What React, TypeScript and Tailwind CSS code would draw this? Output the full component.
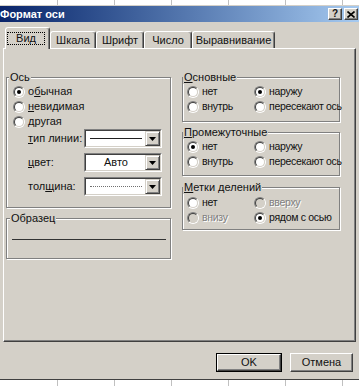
import React from 'react';

const FONT = "font-['Liberation_Sans',Arial,sans-serif]";

function GridStrip({ className }: { className: string }) {
  const cols = [58, 57, 57, 57, 57, 57, 57];
  return (
    <div className={`flex bg-white overflow-hidden ${className}`}>
      {cols.map((w, i) => (
        <div key={i} className="shrink-0 h-full border-r border-r-[#c0c0c0]" style={{ width: w }} />
      ))}
    </div>
  );
}

function Radio({ checked, disabled }: { checked?: boolean; disabled?: boolean }) {
  return (
    <span className="relative inline-block shrink-0 w-[12px] h-[12px] rounded-full border border-t-[#808080] border-l-[#808080] border-r-white border-b-white">
      <span
        className={`absolute inset-0 rounded-full border border-t-[#404040] border-l-[#404040] border-r-[#d4d0c8] border-b-[#d4d0c8] ${
          disabled ? 'bg-[#d4d0c8]' : 'bg-white'
        }`}
      />
      {checked && <span className="absolute left-[3px] top-[3px] w-[4px] h-[4px] rounded-full bg-black" />}
    </span>
  );
}

function Option({
  children,
  checked,
  disabled,
}: {
  children: React.ReactNode;
  checked?: boolean;
  disabled?: boolean;
}) {
  return (
    <div className="flex items-center h-[15px] gap-[3px] whitespace-nowrap">
      <Radio checked={checked} disabled={disabled} />
      <span className={disabled ? 'text-[#808080] [text-shadow:1px_1px_0_#fff]' : ''}>{children}</span>
    </div>
  );
}

function Group({
  title,
  offset,
  className,
  children,
}: {
  title: React.ReactNode;
  offset: string;
  className: string;
  children?: React.ReactNode;
}) {
  return (
    <div className={`relative shrink-0 border border-[#808080] shadow-[inset_1px_1px_0_#fff,1px_1px_0_#fff] ${className}`}>
      <span className={`absolute top-[-7px] bg-[#d4d0c8] px-[1px] text-[11px] tracking-normal leading-[13px] whitespace-nowrap ${offset}`}>
        {title}
      </span>
      {children}
    </div>
  );
}

function DropButton() {
  return (
    <div className="w-[15px] h-full shrink-0 flex items-center justify-center bg-[#d4d0c8] border border-t-[#d4d0c8] border-l-[#d4d0c8] border-r-[#404040] border-b-[#404040] shadow-[inset_1px_1px_0_#fff,inset_-1px_-1px_0_#808080]">
      <svg width="7" height="4" viewBox="0 0 7 4">
        <path d="M0 0h7L3.5 4z" fill="#000" />
      </svg>
    </div>
  );
}

function Combo({ children }: { children: React.ReactNode }) {
  return (
    <div className="flex w-[78px] h-[19px] shrink-0 border border-t-[#808080] border-l-[#808080] border-r-white border-b-white">
      <div className="flex flex-1 bg-white border border-t-[#404040] border-l-[#404040] border-r-[#d4d0c8] border-b-[#d4d0c8]">
        <div className="flex-1 flex items-center justify-center pl-[4px] pr-[3px]">{children}</div>
        <DropButton />
      </div>
    </div>
  );
}

function Raised({ className, children }: { className: string; children: React.ReactNode }) {
  return (
    <div
      className={`flex items-center justify-center bg-[#d4d0c8] border border-t-white border-l-white border-r-[#404040] border-b-[#404040] shadow-[inset_-1px_-1px_0_#808080] ${className}`}
    >
      {children}
    </div>
  );
}

export default function App() {
  const tabs = [
    { label: 'Шкала', w: 'w-[46px]' },
    { label: 'Шрифт', w: 'w-[48px]' },
    { label: 'Число', w: 'w-[48px]' },
    { label: 'Выравнивание', w: 'w-[83px]' },
  ];

  return (
    <div className={`w-[359px] h-[386px] overflow-hidden bg-white text-[11px] leading-[13px] text-[#111] ${FONT}`}>
      <GridStrip className="h-[5px]" />

      {/* dialog */}
      <div className="h-[375px] flex flex-col bg-[#d4d0c8] border-t border-t-[#d4d0c8] border-b border-b-[#404040]">
        {/* title bar */}
        <div className="h-[16px] shrink-0 flex items-center justify-between pr-[1px] bg-gradient-to-r from-[#0a246a] to-[#a6caf0]">
          <span className="font-bold text-white">Формат оси</span>
          <div className="flex gap-[2px]">
            <Raised className="w-[14px] h-[12px]">
              <span className="font-bold text-[10px] leading-[10px]">?</span>
            </Raised>
            <Raised className="w-[14px] h-[12px]">
              <svg width="8" height="7" viewBox="0 0 8 7">
                <path d="M0.5 0.5l7 6M7.5 0.5l-7 6" stroke="#000" strokeWidth="1.6" />
              </svg>
            </Raised>
          </div>
        </div>

        {/* tabs */}
        <div className="flex items-end h-[21px] mt-[5px] pl-[5px] shrink-0">
          <div className="relative z-10 w-[45px] h-[22px] -mb-px bg-[#d4d0c8] rounded-t-[3px] border-t border-l border-r border-t-white border-l-white border-r-[#404040] shadow-[inset_-1px_0_0_#808080]">
            <div className="ml-[1px] mt-[4px] w-[38px] h-[13px] flex items-center justify-center border border-dotted border-black">
              Вид
            </div>
          </div>
          {tabs.map((t) => (
            <div
              key={t.label}
              className={`${t.w} h-[17px] flex items-center justify-center rounded-t-[3px] border-t border-l border-r border-t-white border-l-white border-r-[#404040] shadow-[inset_-1px_0_0_#808080]`}
            >
              {t.label}
            </div>
          ))}
        </div>

        {/* tab panel */}
        <div className="mx-[3px] h-[294px] shrink-0 flex gap-[11px] pt-[28px] pl-[2px] border border-t-white border-l-white border-r-[#404040] border-b-[#404040] shadow-[inset_-1px_-1px_0_#808080]">
          {/* left column */}
          <div className="w-[165px] flex flex-col">
            <Group title="Ось" offset="left-[2px]" className="h-[131px]">
              <div className="pt-[6px] pl-[6px]">
                <Option checked>
                  о<span className="underline">б</span>ычная
                </Option>
                <Option>
                  <span className="underline">н</span>евидимая
                </Option>
                <Option>
                  <span className="underline">д</span>ругая
                </Option>
              </div>
              <div className="flex flex-col gap-[5px] pl-[21px]">
                <div className="flex items-center">
                  <span className="w-[56px]">
                    <span className="underline">т</span>ип линии:
                  </span>
                  <Combo>
                    <div className="w-full h-px bg-[#202020]" />
                  </Combo>
                </div>
                <div className="flex items-center">
                  <span className="w-[56px]">
                    <span className="underline">ц</span>вет:
                  </span>
                  <Combo>
                    <span>Авто</span>
                  </Combo>
                </div>
                <div className="flex items-center">
                  <span className="w-[56px]">
                    тол<span className="underline">щ</span>ина:
                  </span>
                  <Combo>
                    <div className="w-full border-t border-dotted border-[#707070]" />
                  </Combo>
                </div>
              </div>
            </Group>

            <Group title="Образец" offset="left-[3px]" className="h-[41px] mt-[10px]">
              <div className="mt-[20px] ml-[5px] mr-[4px] h-px bg-[#333]" />
            </Group>
          </div>

          {/* right column */}
          <div className="w-[158px] flex flex-col text-[10.5px] tracking-[-0.3px]">
            <Group
              title={
                <>
                  <span className="underline">О</span>сновные
                </>
              }
              offset="left-0"
              className="h-[45px]"
            >
              <div className="grid grid-cols-[67px_1fr] pt-[6px] pl-[4px]">
                <Option>нет</Option>
                <Option checked>наружу</Option>
                <Option>внутрь</Option>
                <Option>пересекают ось</Option>
              </div>
            </Group>

            <Group
              title={
                <>
                  <span className="underline">П</span>ромежуточные
                </>
              }
              offset="left-0"
              className="h-[44px] mt-[10px]"
            >
              <div className="grid grid-cols-[67px_1fr] pt-[6px] pl-[4px]">
                <Option checked>нет</Option>
                <Option>наружу</Option>
                <Option>внутрь</Option>
                <Option>пересекают ось</Option>
              </div>
            </Group>

            <Group
              title={
                <>
                  <span className="underline">М</span>етки делений
                </>
              }
              offset="left-0"
              className="h-[43px] mt-[11px]"
            >
              <div className="grid grid-cols-[67px_1fr] pt-[7px] pl-[4px]">
                <Option>нет</Option>
                <Option disabled>вверху</Option>
                <Option disabled>внизу</Option>
                <Option checked>рядом с осью</Option>
              </div>
            </Group>
          </div>
        </div>

        {/* buttons */}
        <div className="flex justify-end gap-[8px] pr-[6px] mt-[11px] h-[19px] shrink-0">
          <div className="w-[66px] h-full border border-black">
            <Raised className="w-full h-full">OK</Raised>
          </div>
          <Raised className="w-[63px] h-full">Отмена</Raised>
        </div>
        <div className="flex-1" />
      </div>

      <GridStrip className="h-[6px]" />
    </div>
  );
}
